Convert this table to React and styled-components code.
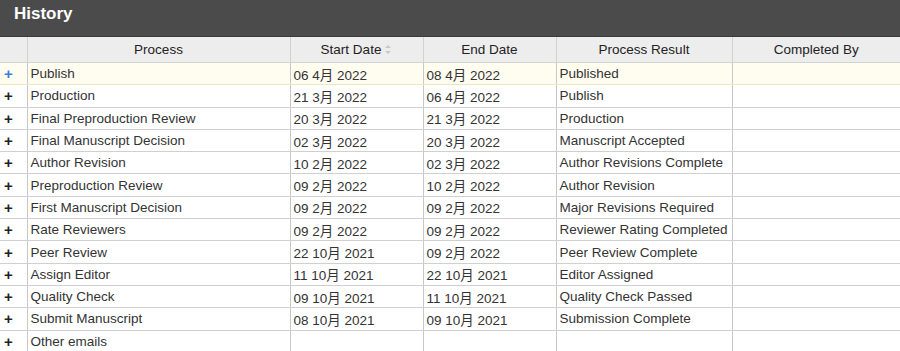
import styled, { createGlobalStyle } from 'styled-components';

const GlobalStyle = createGlobalStyle`
  html, body {
    margin: 0;
    padding: 0;
    background: #ffffff;
    overflow: hidden;
  }
  body {
    font-family: "Liberation Sans", Arial, "Noto Sans CJK SC", sans-serif;
  }
`;

const rows = [
  ['Publish', '06 4月 2022', '08 4月 2022', 'Published'],
  ['Production', '21 3月 2022', '06 4月 2022', 'Publish'],
  ['Final Preproduction Review', '20 3月 2022', '21 3月 2022', 'Production'],
  ['Final Manuscript Decision', '02 3月 2022', '20 3月 2022', 'Manuscript Accepted'],
  ['Author Revision', '10 2月 2022', '02 3月 2022', 'Author Revisions Complete'],
  ['Preproduction Review', '09 2月 2022', '10 2月 2022', 'Author Revision'],
  ['First Manuscript Decision', '09 2月 2022', '09 2月 2022', 'Major Revisions Required'],
  ['Rate Reviewers', '09 2月 2022', '09 2月 2022', 'Reviewer Rating Completed'],
  ['Peer Review', '22 10月 2021', '09 2月 2022', 'Peer Review Complete'],
  ['Assign Editor', '11 10月 2021', '22 10月 2021', 'Editor Assigned'],
  ['Quality Check', '09 10月 2021', '11 10月 2021', 'Quality Check Passed'],
  ['Submit Manuscript', '08 10月 2021', '09 10月 2021', 'Submission Complete'],
  ['Other emails', '', '', ''],
];

const Panel = styled.div`
  width: 900px;
  height: 351px;
  overflow: hidden;
`;

const TitleBar = styled.div`
  height: 37px;
  background: #4b4b4b;
  color: #ffffff;
  font-size: 17px;
  font-weight: bold;
  padding: 4px 0 0 14px;
  box-sizing: border-box;
  border-bottom: 1px solid #3a3a3a;
`;

const Table = styled.table`
  width: 900px;
  border-collapse: collapse;
  table-layout: fixed;
  font-size: 13.5px;
  color: #333333;
`;

const HeadCell = styled.th`
  height: 25px;
  padding: 0;
  background: #ededed;
  border: 1px solid #d2d2d2;
  border-top: none;
  font-weight: normal;
  color: #222222;
  text-align: center;
  white-space: nowrap;
  &:first-child { border-left: none; }
  &:last-child { border-right: none; }
`;

const SortIcon = styled.span`
  display: inline-block;
  margin-left: 4px;
  vertical-align: middle;
  width: 7px;
  height: 9px;
  position: relative;
  top: -1px;
  &::before, &::after {
    content: '';
    position: absolute;
    left: 0;
    border-left: 3.5px solid transparent;
    border-right: 3.5px solid transparent;
  }
  &::before { top: 0; border-bottom: 3.5px solid #c8c8c8; }
  &::after { bottom: 0; border-top: 3.5px solid #c8c8c8; }
`;

const Row = styled.tr`
  background: ${p => (p.$active ? '#fffcf0' : '#ffffff')};
`;

const Cell = styled.td`
  height: 21.3px;
  padding: 0 0 0 3px;
  border: 1px solid ${p => (p.$active ? '#ece7c2' : '#d0d0d0')};
  border-left-color: #c8c8c8;
  border-right-color: #c8c8c8;
  white-space: nowrap;
  overflow: hidden;
  &:first-child { border-left: none; }
  &:last-child { border-right: none; }
`;

const ExpandCell = styled(Cell)`
  padding: 0 0 0 4px;
  font-size: 15px;
  font-weight: bold;
  color: ${p => (p.$active ? '#3b7ddd' : '#222222')};
`;

export default function App() {
  return (
    <>
      <GlobalStyle />
      <Panel>
        <TitleBar>History</TitleBar>
        <Table>
          <colgroup>
            <col style={{ width: 27 }} />
            <col style={{ width: 263 }} />
            <col style={{ width: 133 }} />
            <col style={{ width: 133 }} />
            <col style={{ width: 176 }} />
            <col style={{ width: 168 }} />
          </colgroup>
          <thead>
            <tr>
              <HeadCell />
              <HeadCell>Process</HeadCell>
              <HeadCell>Start Date<SortIcon /></HeadCell>
              <HeadCell>End Date</HeadCell>
              <HeadCell>Process Result</HeadCell>
              <HeadCell>Completed By</HeadCell>
            </tr>
          </thead>
          <tbody>
            {rows.map((r, i) => (
              <Row key={r[0]} $active={i === 0}>
                <ExpandCell $active={i === 0}>+</ExpandCell>
                <Cell $active={i === 0}>{r[0]}</Cell>
                <Cell $active={i === 0}>{r[1]}</Cell>
                <Cell $active={i === 0}>{r[2]}</Cell>
                <Cell $active={i === 0}>{r[3]}</Cell>
                <Cell $active={i === 0}></Cell>
              </Row>
            ))}
          </tbody>
        </Table>
      </Panel>
    </>
  );
}
